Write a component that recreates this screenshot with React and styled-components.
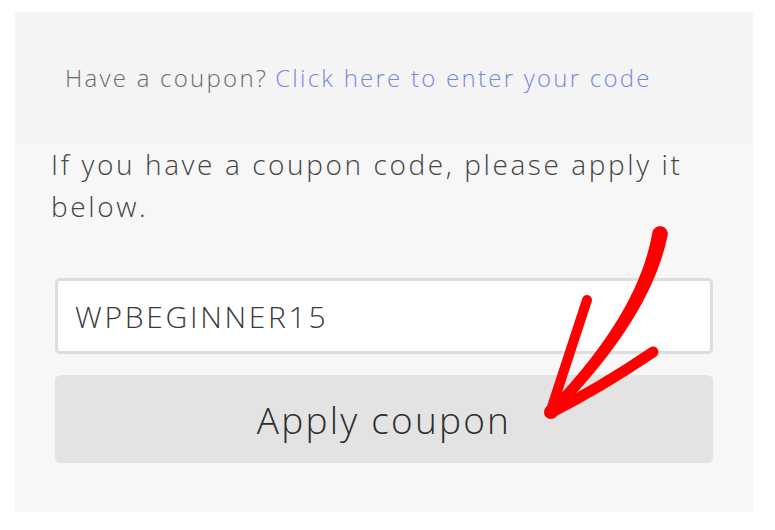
import React from "react";
import styled, { createGlobalStyle } from "styled-components";

const Global = createGlobalStyle`
  html, body { margin: 0; padding: 0; background: #ffffff; }
  body { font-family: "Open Sans", "Liberation Sans", sans-serif; }
`;

const Page = styled.div`
  padding: 12px 22px 18px 15px;
`;

const Panel = styled.div`
  position: relative;
  width: 738px;
  height: 500px;
  background: #f7f7f7;
  display: flex;
  flex-direction: column;
`;

const Notice = styled.div`
  height: 132px;
  background: #f4f4f4;
  display: flex;
  align-items: center;
  padding-left: 50px;
  font-size: 24px;
  font-weight: 300;
  letter-spacing: 2.25px;
  color: #6b6b6b;
  white-space: nowrap;
`;

const Link = styled.a`
  color: #7b86e2;
  text-decoration: none;
  margin-left: 7px;
`;

const Body = styled.div`
  padding: 0 40px 49px 36px;
  display: flex;
  flex-direction: column;
`;

const Intro = styled.p`
  margin: 0;
  font-size: 28px;
  line-height: 42px;
  font-weight: 300;
  letter-spacing: 2.6px;
  color: #444444;
`;

const Field = styled.input`
  margin: 51px 0 0 4px;
  height: 76px;
  box-sizing: border-box;
  border: 3px solid #dddddd;
  border-radius: 5px;
  background: #ffffff;
  padding: 0 17px;
  font-family: "Open Sans", "Liberation Sans", sans-serif;
  font-size: 30px;
  font-weight: 300;
  letter-spacing: 2.7px;
  color: #3a3a3a;
  outline: none;
`;

const Button = styled.button`
  margin: 21px 0 0 4px;
  height: 88px;
  border: none;
  border-radius: 6px;
  background: #e3e3e3;
  font-family: "Open Sans", "Liberation Sans", sans-serif;
  font-size: 37px;
  font-weight: 300;
  letter-spacing: 2.2px;
  color: #2e2e2e;
  cursor: pointer;
`;

const Arrow = styled.svg`
  position: absolute;
  left: 515px;
  top: 208px;
  width: 150px;
  height: 210px;
  overflow: visible;
  pointer-events: none;
`;

export default function App() {
  return (
    <>
      <Global />
      <Page>
        <Panel>
          <Notice>
            Have a coupon?<Link href="#">Click here to enter your code</Link>
          </Notice>
          <Body>
            <Intro>If you have a coupon code, please apply it below.</Intro>
            <Field defaultValue="WPBEGINNER15" />
            <Button>Apply coupon</Button>
          </Body>
          <Arrow viewBox="0 0 150 210">
            <path
              d="M123.1 12.7 C112.3 76.2, 68.2 136.8, 16.8 189.8 L23.2 196.2 C75.8 143.2, 123.7 79.8, 136.9 15.3 A7 7 0 0 0 123.1 12.7 Z"
              fill="#ff0000"
              stroke="#ff0000"
              strokeWidth="1.5"
              strokeLinejoin="round"
            />
            <g fill="none" stroke="#ff0000" strokeLinecap="round" strokeLinejoin="round">
              <path d="M57 80 L 20 193" strokeWidth="10" />
              <path d="M123 132 Q 70 168 20 193" strokeWidth="11" />
            </g>
            <circle cx="21" cy="192" r="7" fill="#ff0000" />
          </Arrow>
        </Panel>
      </Page>
    </>
  );
}
